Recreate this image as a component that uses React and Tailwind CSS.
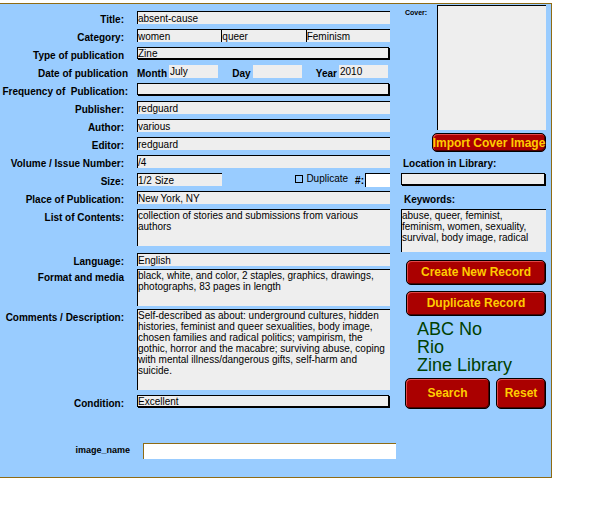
import React from "react";

const FIELD =
  "block h-[13px] w-full min-w-0 border-t border-l border-black bg-[#eeeeee] leading-[11px] rounded-none";
const AREA =
  "block w-full min-w-0 resize-none overflow-hidden border-t border-l border-black bg-[#eeeeee] leading-[11px] rounded-none";
const SELECT =
  "mr-px mb-px block h-3 min-w-0 flex-1 appearance-none border border-black bg-[#eeeeee] pt-px leading-[10px] shadow-[1px_1px_0_#000] rounded-none";
const BUTTON =
  "flex items-center justify-center whitespace-nowrap rounded-[5px] border border-black bg-[#aa0000] text-[12px] leading-[14px] font-bold text-[#ffcc00] shadow-[inset_1px_1px_0_#e04848,inset_-1px_-1px_0_#500000]";

function Row({ id, label, wide, className = "mb-[5px]", children }) {
  return (
    <div className={`flex items-start ${className}`}>
      <label
        htmlFor={id}
        className={`-mb-[5px] w-[137px] shrink-0 whitespace-pre text-right font-bold leading-[18px] ${
          wide ? "pr-[9px]" : "pr-[13px]"
        }`}
      >
        {label}
      </label>
      {children}
    </div>
  );
}

function TextRow({ id, label, value, className }) {
  return (
    <Row id={id} label={label} className={className}>
      <input id={id} type="text" defaultValue={value} className={FIELD} />
    </Row>
  );
}

function DatePart({ id, label, value }) {
  return (
    <div className="flex items-start justify-end">
      <label htmlFor={id} className="-mb-[5px] pr-[2px] font-bold leading-[18px]">
        {label}
      </label>
      <input
        id={id}
        type="text"
        defaultValue={value}
        className="block h-[13px] w-[49px] bg-[#eeeeee] pl-px leading-[13px]"
      />
    </div>
  );
}

export default function App() {
  return (
    <div className="bg-white pt-[3px] pr-10 font-['Liberation_Sans',Arial,sans-serif] text-[10px] text-black">
      <form
        onSubmit={(e) => e.preventDefault()}
        className="border-t border-r border-b border-[#8f6b14] bg-[#99ccff] pb-[18px]"
      >
        <div className="flex gap-[11px] pr-[5px]">
          <section className="min-w-0 flex-1 pt-[7px]">
            <TextRow id="title" label="Title:" value="absent-cause" />
            <Row id="category" label="Category:">
              <div className="grid min-w-0 flex-1 grid-cols-3">
                <input id="category" type="text" defaultValue="women" className={FIELD} />
                <input aria-label="Category 2" type="text" defaultValue="queer" className={FIELD} />
                <input aria-label="Category 3" type="text" defaultValue="Feminism" className={FIELD} />
              </div>
            </Row>
            <Row id="type" label="Type of publication">
              <select id="type" className={SELECT}>
                <option>Zine</option>
              </select>
            </Row>
            <Row id="month" label="Date of publication" wide>
              <div className="flex min-w-0 flex-1 justify-between pr-[2px]">
                <DatePart id="month" label="Month" value="July" />
                <DatePart id="day" label="Day" value="" />
                <DatePart id="year" label="Year" value="2010" />
              </div>
            </Row>
            <Row id="frequency" label="Frequency of  Publication:" wide>
              <select id="frequency" className={SELECT}>
                <option></option>
              </select>
            </Row>
            <TextRow id="publisher" label="Publisher:" value="redguard" />
            <TextRow id="author" label="Author:" value="various" />
            <TextRow id="editor" label="Editor:" value="redguard" />
            <TextRow id="volume" label="Volume / Issue Number:" value="/4" />
            <Row id="size" label="Size:">
              <div className="-mb-px flex min-w-0 flex-1 items-start">
                <div className="w-[85px]">
                  <input id="size" type="text" defaultValue="1/2 Size" className={FIELD} />
                </div>
                <label className="ml-auto flex items-center gap-[3px] leading-[12px]">
                  <input
                    type="checkbox"
                    className="size-2 appearance-none border border-black bg-transparent checked:bg-black"
                  />
                  Duplicate
                </label>
                <label htmlFor="copies" className="-mb-[5px] ml-[7px] pr-px font-bold leading-[16px]">
                  #:
                </label>
                <input
                  id="copies"
                  type="text"
                  className="block h-[14px] w-[25px] border-t border-l border-black bg-white"
                />
              </div>
            </Row>
            <TextRow id="place" label="Place of Publication:" value="New York, NY" />
            <Row id="contents" label="List of Contents:" className="mb-[7px]">
              <textarea
                id="contents"
                className={`${AREA} h-[37px]`}
                defaultValue="collection of stories and submissions from various authors"
              />
            </Row>
            <TextRow id="language" label="Language:" value="English" className="mb-[3px]" />
            <Row id="format" label="Format and media" className="mb-[3px]">
              <textarea
                id="format"
                className={`${AREA} h-[37px]`}
                defaultValue="black, white, and color, 2 staples, graphics, drawings, photographs, 83 pages in length"
              />
            </Row>
            <Row id="comments" label="Comments / Description:">
              <textarea
                id="comments"
                className={`${AREA} h-[81px]`}
                defaultValue="Self-described as about: underground cultures, hidden histories, feminist and queer sexualities, body image, chosen families and radical politics; vampirism, the gothic, horror and the macabre; surviving abuse, coping with mental illness/dangerous gifts, self-harm and suicide."
              />
            </Row>
            <Row id="condition" label="Condition:" className="">
              <select id="condition" className={SELECT}>
                <option>Excellent</option>
              </select>
            </Row>
          </section>

          <aside className="flex w-[145px] shrink-0 flex-col pt-px">
            <div className="flex justify-between pl-1">
              <span className="text-[7px] leading-[16px] font-bold">Cover:</span>
              <div className="h-[125px] w-[109px] border-t border-l border-black bg-[#eeeeee]" />
            </div>
            <button type="button" className={`${BUTTON} mt-[3px] h-[19px] w-[114px] self-end`}>
              Import Cover Image
            </button>
            <label htmlFor="location" className="mt-[3px] pl-[2px] font-bold leading-[18px]">
              Location in Library:
            </label>
            <div className="flex">
              <select id="location" className={SELECT}>
                <option></option>
              </select>
            </div>
            <label htmlFor="keywords" className="mt-[5px] pl-[3px] font-bold leading-[18px]">
              Keywords:
            </label>
            <textarea
              id="keywords"
              className={`${AREA} h-[43px]`}
              defaultValue="abuse, queer, feminist, feminism, women, sexuality, survival, body image, radical"
            />
            <div className="mt-2 flex flex-col gap-[6px] pl-[5px]">
              <button type="button" className={`${BUTTON} h-[25px] pb-[2px]`}>
                Create New Record
              </button>
              <button type="button" className={`${BUTTON} h-[25px] pb-[2px]`}>
                Duplicate Record
              </button>
            </div>
            <h1 className="mt-1 pl-4 text-[18px] leading-[18px] text-[#004000]">
              ABC No
              <br />
              Rio
              <br />
              Zine Library
            </h1>
            <div className="mt-1 flex gap-[6px] pl-1">
              <button type="submit" className={`${BUTTON} h-[31px] flex-1 pb-[2px]`}>
                Search
              </button>
              <button type="reset" className={`${BUTTON} h-[31px] w-[50px] pb-[2px]`}>
                Reset
              </button>
            </div>
          </aside>
        </div>

        <div className="mt-[34px] flex items-start pr-[155px]">
          <label
            htmlFor="image-name"
            className="w-[143px] shrink-0 pr-[13px] text-right text-[9px] leading-[14px] font-bold"
          >
            image_name
          </label>
          <input
            id="image-name"
            type="text"
            className="block h-4 min-w-0 flex-1 border-t border-l border-[#8f6b14] bg-white"
          />
        </div>
      </form>
    </div>
  );
}
